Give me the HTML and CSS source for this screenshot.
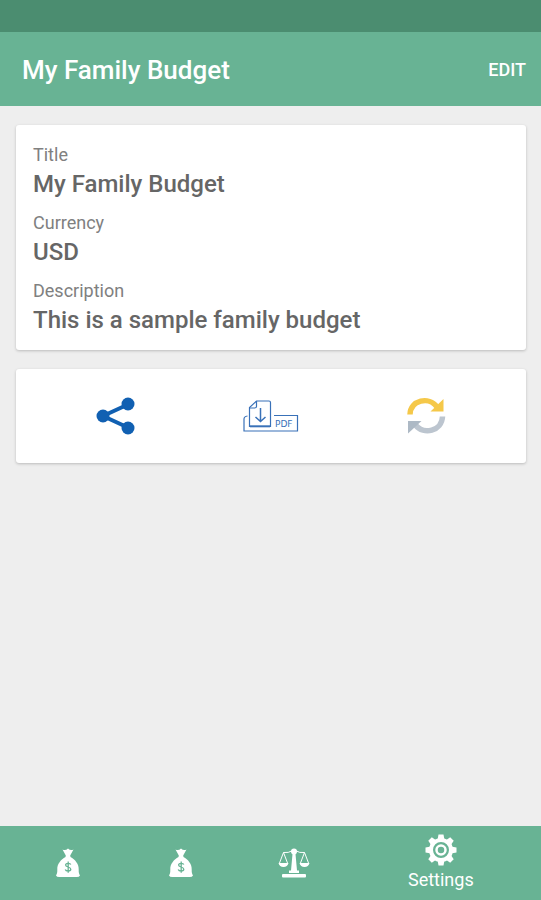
FILE: index.html
```html
<!DOCTYPE html>
<html lang="en">
<head>
<meta charset="utf-8">
<meta name="viewport" content="width=device-width, initial-scale=1">
<title>My Family Budget</title>
<link rel="stylesheet" href="styles.css">
</head>
<body>
<svg width="0" height="0" class="sprite" aria-hidden="true">
  <symbol id="money-bag" viewBox="0 0 26 30">
    <path fill="currentColor" d="M7.500 1.500Q10.500 3 13 .5Q15.500 3 18.500 1.500L15.200 7.500L15.500 9C20 11.500 24 16 23.700 21.500C23.600 24.500 24 26 25 27.500Q24 29.500 20.500 29H5.500Q2 29.500 1 27.500C2 26 2.400 24.500 2.300 21.500C2 16 6 11.500 10.500 9L10.800 7.500Z"/>
    <path class="bag-sign" d="M15.800 16.500C15 14.800 10.600 14.800 10.600 17C10.600 19.500 15.800 18.500 15.800 21.300C15.800 23.500 11 23.500 10.200 21.500M13.200 13.500V24.800"/>
  </symbol>
</svg>
<div class="app">
  <div class="status-bar"></div>
  <header class="app-bar">
    <h1 class="app-title">My Family Budget</h1>
    <button type="button" class="edit-button">EDIT</button>
  </header>
  <main class="content">
    <section class="card">
      <dl class="details">
        <div class="detail"><dt>Title</dt><dd>My Family Budget</dd></div>
        <div class="detail"><dt>Currency</dt><dd>USD</dd></div>
        <div class="detail"><dt>Description</dt><dd>This is a sample family budget</dd></div>
      </dl>
    </section>
    <section class="card actions">
      <button type="button" class="action" aria-label="Share">
        <svg width="40" height="40" viewBox="0 0 40 40" fill="#1160b2">
          <path d="M33 8L7 20L33 32" fill="none" stroke="#1160b2" stroke-width="4"/>
          <circle cx="7" cy="20" r="6.500"/><circle cx="32" cy="8" r="6.500"/><circle cx="32" cy="32" r="6.500"/>
        </svg>
      </button>
      <button type="button" class="action" aria-label="Export PDF">
        <svg width="56" height="34" viewBox="0 0 56 34" fill="none" stroke="#3971b8" stroke-width="1.200">
          <path d="M31 16.500H54.500V32H1V20Q1 17.500 4.500 17"/>
          <path d="M13.500 2H26Q27.500 2 27.500 3.500V27.500H6.500V8.500Z" fill="#fff"/>
          <path d="M6.500 9H11.500Q13.500 9 13.500 7.500V2"/>
          <path d="M7 27.300H27" stroke-width="2"/>
          <path d="M17.500 9V22M12.500 18L17.500 22.500L22.500 18" stroke-width="1.500"/>
          <text x="32" y="28" class="pdf-text">PDF</text>
        </svg>
      </button>
      <button type="button" class="action" aria-label="Refresh">
        <svg width="40" height="40" viewBox="0 0 40 40">
          <path d="M4 18.500C4.500 4 23 0 31 11" fill="none" stroke="#f5c849" stroke-width="5.500"/>
          <path d="M37.500 3V15.500H24.500Z" fill="#f5c849"/>
          <path d="M36.500 20.500C36 35 17.500 39.500 9.500 29" fill="none" stroke="#bcc5cf" stroke-width="5.500"/>
          <path d="M2 25H15.500L2 37.500Z" fill="#adb9c5"/>
        </svg>
      </button>
    </section>
  </main>
  <nav class="tab-bar">
    <a href="#income" class="tab" aria-label="Income"><svg width="26" height="30"><use href="#money-bag"/></svg></a>
    <a href="#expenses" class="tab" aria-label="Expenses"><svg width="26" height="30"><use href="#money-bag"/></svg></a>
    <a href="#balance" class="tab" aria-label="Balance">
      <svg width="32" height="30" viewBox="0 0 32 30" fill="currentColor">
        <path d="M14.500 6H17.500L19 22.500H21V25H11V22.500H13Z"/>
        <circle cx="16" cy="3.500" r="3"/>
        <rect x="4" y="26" width="24" height="3.500" rx="1"/>
        <path d="M5.500 4.500Q11 5 13.500 3H18.500Q21 5 26.500 4.500M5.500 4.500L1.500 15M5.500 4.500L9.500 15M26.500 4.500L22.500 15M26.500 4.500L30.500 15" fill="none" stroke="currentColor"/>
        <path d="M.5 15H10.500Q9.500 19 5.500 19Q1.500 19 .5 15ZM21.500 15H31.500Q30.500 19 26.500 19Q22.500 19 21.500 15Z"/>
      </svg>
    </a>
    <a href="#settings" class="tab tab-active" aria-current="page">
      <svg width="32" height="32" viewBox="-16 -16 32 32" fill="none" stroke="currentColor">
        <g fill="currentColor" stroke="none">
          <path id="teeth" d="M-3.500 -10L-2.500 -15.500H2.500L3.500 -10ZM-3.500 10L-2.500 15.500H2.500L3.500 10ZM-10 -3.500L-15.500 -2.500V2.500L-10 3.500ZM10 -3.500L15.500 -2.500V2.500L10 3.500Z"/>
          <use href="#teeth" transform="rotate(45)"/>
        </g>
        <circle r="10" stroke-width="4"/>
        <circle r="4.500" stroke-width="2.500"/>
      </svg>
      <span class="tab-label">Settings</span>
    </a>
  </nav>
</div>
</body>
</html>
```
FILE: styles.css
```css
* {
  box-sizing: border-box;
}

body {
  margin: 0;
  background: #eee;
  font-family: Roboto, "Liberation Sans", sans-serif;
  color: #666;
}

button {
  border: 0;
  padding: 0;
  background: none;
  font: inherit;
  cursor: pointer;
}

svg {
  display: block;
}

.sprite {
  position: absolute;
}

.bag-sign {
  fill: none;
  stroke: #68b394;
  stroke-width: 1.3px;
}

.app {
  display: flex;
  flex-direction: column;
  min-height: 100vh;
}

.status-bar {
  height: 32px;
  background: #4b8d70;
}

.app-bar {
  display: flex;
  align-items: center;
  justify-content: space-between;
  height: 74px;
  padding: 2px 15px 0 22px;
  background: #68b394;
  color: #fff;
}

.app-title {
  margin: 0;
  font-size: 26px;
  line-height: 32px;
  font-weight: 500;
}

.edit-button {
  color: #fff;
  font-size: 18px;
  line-height: 24px;
  font-weight: 500;
}

.content {
  flex: 1;
  display: flex;
  flex-direction: column;
  gap: 19px;
  padding: 19px 15px 20px 16px;
}

.card {
  background: #fff;
  border-radius: 3px;
  box-shadow: 0 1px 3px rgba(0, 0, 0, 0.22);
}

.details {
  display: flex;
  flex-direction: column;
  gap: 10px;
  margin: 0;
  padding: 16px 17px 15px;
}

.detail dt {
  font-size: 18px;
  line-height: 28px;
  color: #808080;
}

.detail dd {
  margin: 0;
  font-size: 24px;
  line-height: 30px;
  font-weight: 500;
}

.actions {
  display: flex;
  padding: 0 22px;
}

.action {
  flex: 1;
  display: flex;
  align-items: center;
  justify-content: center;
  height: 94px;
}

.pdf-text {
  fill: #3971b8;
  stroke: none;
  font-family: "DejaVu Sans", sans-serif;
  font-size: 9px;
}

.tab-bar {
  display: flex;
  height: 74px;
  padding: 0 10px 0 11px;
  background: #68b394;
}

.tab {
  flex: 113;
  display: flex;
  flex-direction: column;
  align-items: center;
  justify-content: center;
  color: #fff;
  text-decoration: none;
}

.tab-active {
  flex: 180;
  padding-top: 1px;
}

.tab-label {
  font-size: 18px;
  line-height: 28px;
}
```
